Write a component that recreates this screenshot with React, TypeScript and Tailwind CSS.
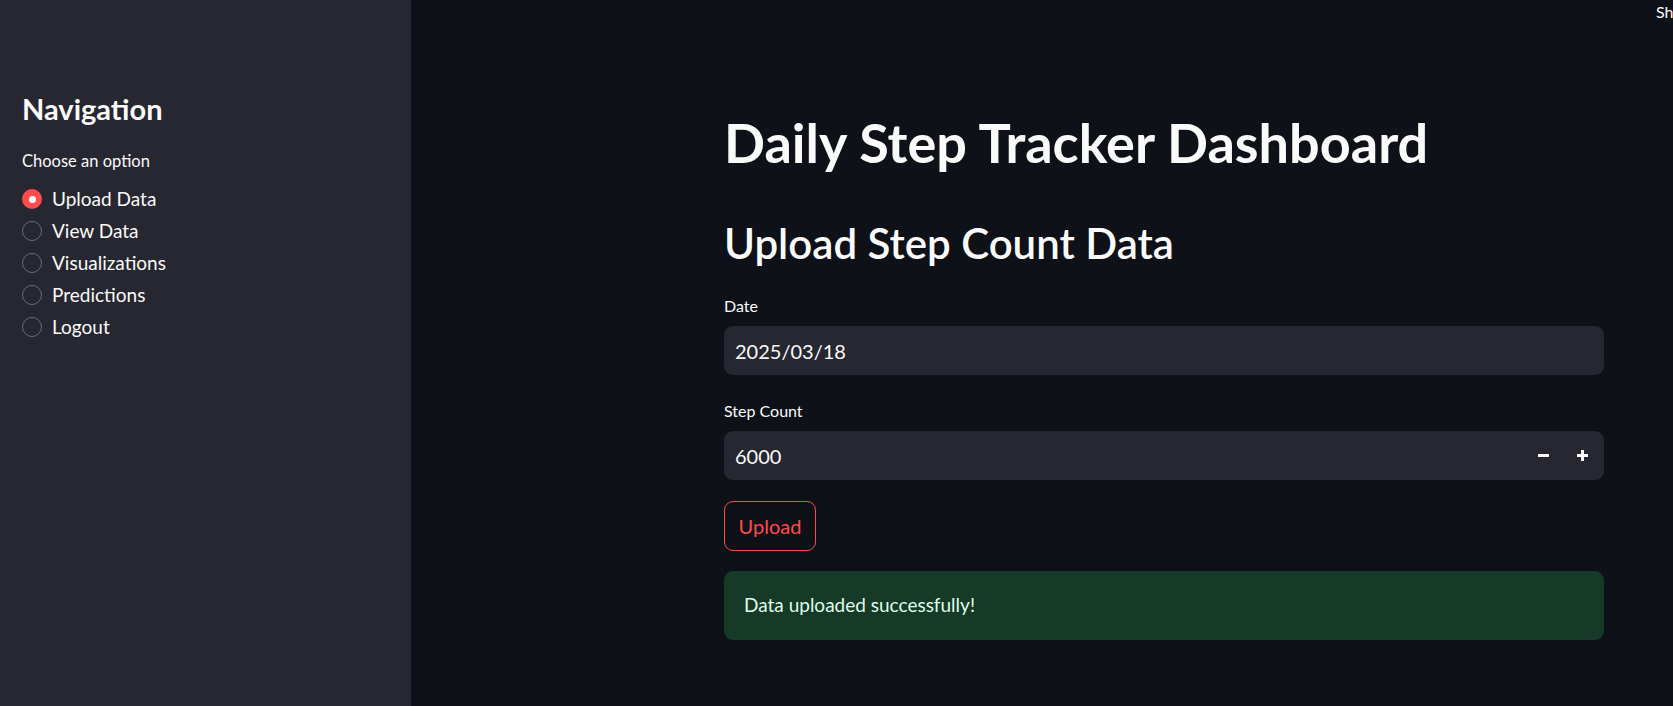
import { useState } from "react";

const opciones = ["Upload Data", "View Data", "Visualizations", "Predictions", "Logout"];

function Radio({ label, selected, onClick }: { label: string; selected: boolean; onClick: () => void }) {
  return (
    <button onClick={onClick} className="flex h-[32px] items-center gap-[10px] text-left">
      {selected ? (
        <span className="flex h-[20px] w-[20px] items-center justify-center rounded-full bg-[#ff4b4b]">
          <span className="h-[7px] w-[7px] rounded-full bg-[#fafafa]" />
        </span>
      ) : (
        <span className="h-[20px] w-[20px] rounded-full border border-[#6b6c74]" />
      )}
      <span className="text-[19px] leading-[24px] text-[#fafafa]">{label}</span>
    </button>
  );
}

export default function App() {
  const [opcion, setOpcion] = useState("Upload Data");
  const [fecha, setFecha] = useState("2025/03/18");
  const [pasos, setPasos] = useState(6000);

  return (
    <div
      className="relative flex min-h-screen h-[706px] w-full overflow-hidden bg-[#0e1117] text-[#fafafa]"
      style={{ fontFamily: "Lato, 'Noto Sans', sans-serif" }}
    >
      <aside className="flex w-[411px] shrink-0 flex-col bg-[#262730] px-[22px] pt-[91px]">
        <h2 className="text-[29px] font-bold leading-[36px]">Navigation</h2>
        <p className="mt-[24px] text-[16.5px] leading-[20px]">Choose an option</p>
        <div className="mt-[12px] flex flex-col">
          {opciones.map((o) => (
            <Radio key={o} label={o} selected={opcion === o} onClick={() => setOpcion(o)} />
          ))}
        </div>
      </aside>

      <main className="flex-1">
        <div className="ml-[313px] flex w-[880px] flex-col pt-[111px]">
          <h1 className="text-[54px] font-bold leading-[64px]">Daily Step Tracker Dashboard</h1>
          <h2 className="mt-[43px] text-[42px] font-semibold leading-[50px]">Upload Step Count Data</h2>

          <label className="mt-[28px] text-[16px] leading-[20px]">Date</label>
          <div className="mt-[10px] flex h-[49px] items-center rounded-[9px] bg-[#262730] pl-[11px]">
            <input
              value={fecha}
              onChange={(e) => setFecha(e.target.value)}
              className="w-full bg-transparent text-[20px] leading-[24px] text-[#fafafa] outline-none"
            />
          </div>

          <label className="mt-[26px] text-[16px] leading-[20px]">Step Count</label>
          <div className="mt-[10px] flex h-[49px] items-center rounded-[9px] bg-[#262730] pl-[11px]">
            <input
              value={pasos}
              onChange={(e) => setPasos(Number(e.target.value) || 0)}
              className="flex-1 bg-transparent text-[20px] leading-[24px] text-[#fafafa] outline-none"
            />
            <button
              onClick={() => setPasos(pasos - 1)}
              className="flex h-[49px] w-[39px] items-center justify-center"
            >
              <span className="block h-[3px] w-[11px] bg-[#fafafa]" />
            </button>
            <button
              onClick={() => setPasos(pasos + 1)}
              className="relative mr-[2px] flex h-[49px] w-[39px] items-center justify-center"
            >
              <span className="block h-[3px] w-[11px] bg-[#fafafa]" />
              <span className="absolute h-[11px] w-[3px] bg-[#fafafa]" />
            </button>
          </div>

          <button className="mt-[21px] flex h-[50px] w-[92px] items-center justify-center rounded-[9px] border border-[#ff4b4b] text-[20px] text-[#ff4b4b]">
            Upload
          </button>

          <div className="mt-[20px] flex h-[69px] items-center rounded-[9px] bg-[#173928] pl-[20px] text-[19px] text-[#dffde9]">
            Data uploaded successfully!
          </div>
        </div>
      </main>

      <div className="absolute left-[1656px] top-0 whitespace-nowrap text-[16px] text-[#fafafa]">Share</div>
    </div>
  );
}
